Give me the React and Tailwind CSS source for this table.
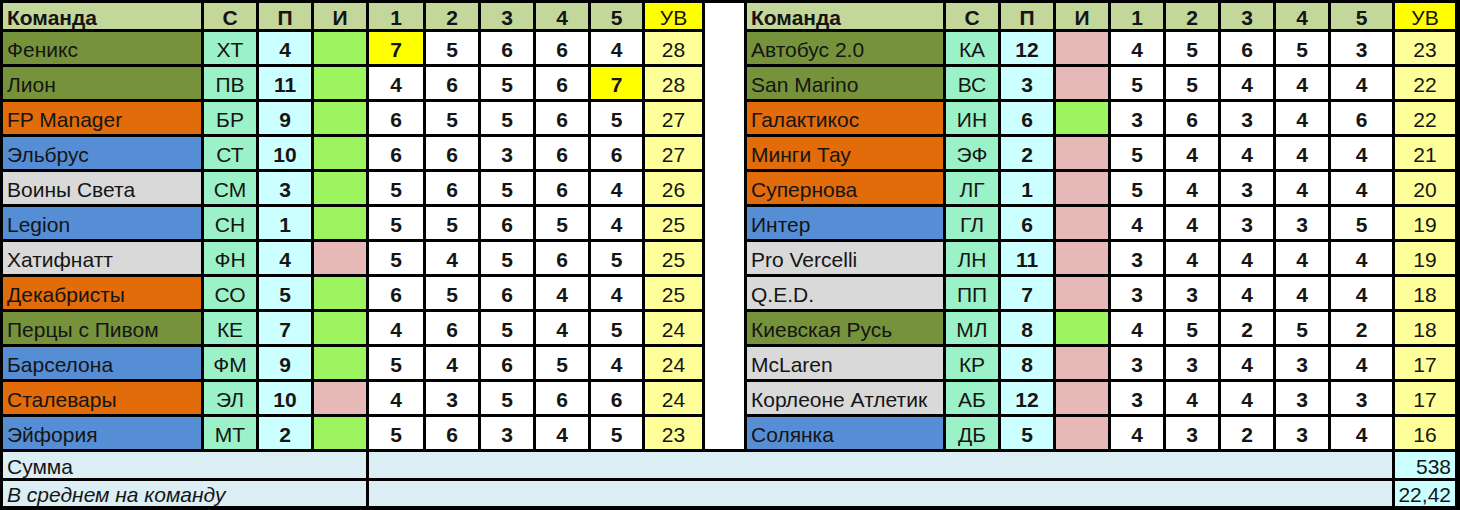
import React from 'react';

// цвета команд
const TEAM_BG = {
  olive: 'bg-[#76933c]',
  orange: 'bg-[#e26b0a]',
  blue: 'bg-[#558ed5]',
  gray: 'bg-[#d9d9d9]',
};

const left = [
  ['Феникс', 'ХТ', 4, true, [7, 5, 6, 6, 4], 28, 'olive', 0],
  ['Лион', 'ПВ', 11, true, [4, 6, 5, 6, 7], 28, 'olive', 4],
  ['FP Manager', 'БР', 9, true, [6, 5, 5, 6, 5], 27, 'orange', -1],
  ['Эльбрус', 'СТ', 10, true, [6, 6, 3, 6, 6], 27, 'blue', -1],
  ['Воины Света', 'СМ', 3, true, [5, 6, 5, 6, 4], 26, 'gray', -1],
  ['Legion', 'СН', 1, true, [5, 5, 6, 5, 4], 25, 'blue', -1],
  ['Хатифнатт', 'ФН', 4, false, [5, 4, 5, 6, 5], 25, 'gray', -1],
  ['Декабристы', 'СО', 5, true, [6, 5, 6, 4, 4], 25, 'orange', -1],
  ['Перцы с Пивом', 'КЕ', 7, true, [4, 6, 5, 4, 5], 24, 'olive', -1],
  ['Барселона', 'ФМ', 9, true, [5, 4, 6, 5, 4], 24, 'blue', -1],
  ['Сталевары', 'ЭЛ', 10, false, [4, 3, 5, 6, 6], 24, 'orange', -1],
  ['Эйфория', 'МТ', 2, true, [5, 6, 3, 4, 5], 23, 'blue', -1],
];

const right = [
  ['Автобус 2.0', 'КА', 12, false, [4, 5, 6, 5, 3], 23, 'olive', -1],
  ['San Marino', 'ВС', 3, false, [5, 5, 4, 4, 4], 22, 'olive', -1],
  ['Галактикос', 'ИН', 6, true, [3, 6, 3, 4, 6], 22, 'orange', -1],
  ['Минги Тау', 'ЭФ', 2, false, [5, 4, 4, 4, 4], 21, 'orange', -1],
  ['Супернова', 'ЛГ', 1, false, [5, 4, 3, 4, 4], 20, 'orange', -1],
  ['Интер', 'ГЛ', 6, false, [4, 4, 3, 3, 5], 19, 'blue', -1],
  ['Pro Vercelli', 'ЛН', 11, false, [3, 4, 4, 4, 4], 19, 'gray', -1],
  ['Q.E.D.', 'ПП', 7, false, [3, 3, 4, 4, 4], 18, 'gray', -1],
  ['Киевская Русь', 'МЛ', 8, true, [4, 5, 2, 5, 2], 18, 'olive', -1],
  ['McLaren', 'КР', 8, false, [3, 3, 4, 3, 4], 17, 'gray', -1],
  ['Корлеоне Атлетик', 'АБ', 12, false, [3, 4, 4, 3, 3], 17, 'gray', -1],
  ['Солянка', 'ДБ', 5, false, [4, 3, 2, 3, 4], 16, 'blue', -1],
];

const Cell = ({ className = '', children }) => (
  <div className={`flex items-center justify-center pt-[2px] ${className}`}>{children}</div>
);

const HeaderCells = () => (
  <>
    <div className="flex items-center bg-[#c4d79b] pl-1 pt-[2px] font-bold">Команда</div>
    {['С', 'П', 'И', '1', '2', '3', '4', '5'].map((h) => (
      <Cell key={h} className="bg-[#c4d79b] font-bold">{h}</Cell>
    ))}
    <Cell className="bg-[#ffff00]">УВ</Cell>
  </>
);

const TeamCells = ({ row }) => {
  const [name, code, p, win, scores, total, color, hi] = row;
  return (
    <>
      <div className={`flex items-center pl-1 pt-[2px] whitespace-nowrap ${TEAM_BG[color]}`}>{name}</div>
      <Cell className="bg-[#9cf2c8]">{code}</Cell>
      <Cell className="bg-[#ccffff] font-bold">{p}</Cell>
      <div className={win ? 'bg-[#9cf55f]' : 'bg-[#e6b8b7]'} />
      {scores.map((s, i) => (
        <Cell key={i} className={`font-bold ${i === hi ? 'bg-[#ffff00]' : 'bg-white'}`}>
          {s}
        </Cell>
      ))}
      <Cell className="bg-[#ffff99]">{total}</Cell>
    </>
  );
};

export default function App() {
  return (
    <div className="w-[1460px] h-[510px] bg-black font-['Liberation_Sans',Arial,sans-serif] text-[21px] leading-none text-[#151515]">
      <div className="grid grid-cols-[198px_52px_52px_52px_54px_52px_52px_52px_51px_57px_39px_196px_52px_52px_52px_52px_52px_52px_52px_61px_60px] grid-rows-[26px_repeat(12,32px)_26px_25px] gap-[3px] pt-[3px] pl-[3px]">
        <div className="col-start-11 row-start-1 row-span-13 bg-white" />

        <HeaderCells />
        <HeaderCells />

        {left.map((row, i) => (
          <React.Fragment key={i}>
            <TeamCells row={row} />
            <TeamCells row={right[i]} />
          </React.Fragment>
        ))}

        <div className="col-span-4 flex items-center bg-[#daeef3] pl-1 pt-[2px]">Сумма</div>
        <div className="col-span-16 bg-[#daeef3]" />
        <div className="flex items-center justify-end bg-[#ccffff] pr-1 pt-[2px]">538</div>

        <div className="col-span-4 flex items-center bg-[#daeef3] pl-1 pt-[2px] italic">В среднем на команду</div>
        <div className="col-span-16 bg-[#daeef3]" />
        <div className="flex items-center justify-end bg-[#ccffff] pr-1 pt-[2px]">22,42</div>
      </div>
    </div>
  );
}
